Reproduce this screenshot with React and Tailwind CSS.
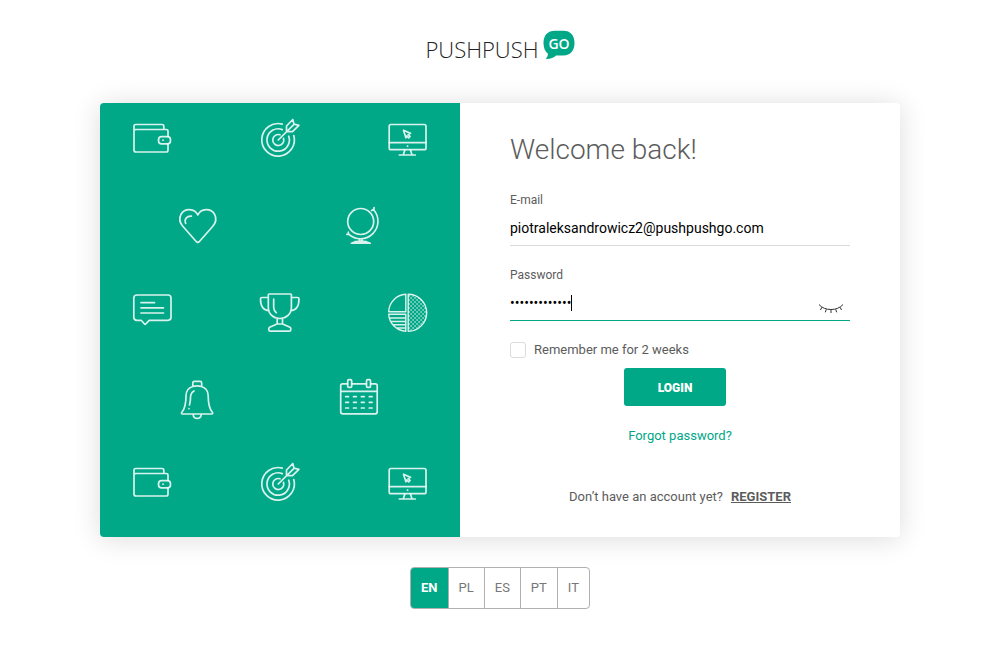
import React, { useState } from "react";

function Icon({ children }) {
  return (
    <svg
      viewBox="0 0 42 42"
      aria-hidden="true"
      className="size-[42px] shrink-0 overflow-visible fill-none stroke-white/85 stroke-[1.7]"
      strokeLinecap="round"
      strokeLinejoin="round"
    >
      {children}
    </svg>
  );
}

function Wallet() {
  return (
    <Icon>
      <path d="M37 19.5V14q0-1.5-1.5-1.5H5.2a1.5 1.5 0 0 1-2.2-1.7V9q0-1.5 1.7-1.5H31q1.8 0 1.8 1.6v3.2M3 10v23q0 2 2 2h30.3q1.7 0 1.7-1.7V27" />
      <rect x="27.5" y="19.7" width="12" height="7.2" rx="3.2" />
      <path d="M32 23.200h.1" />
    </Icon>
  );
}

function Target() {
  return (
    <Icon>
      <path d="M23.300 7.100A16.300 16.300 0 1 0 34.800 18.500M23.300 12.600A11.200 11.200 0 1 0 29.700 19.200M21 17.800A5.500 5.500 0 1 0 24.500 21.300" />
      <path d="M19.200 23 34.500 7.900M27.500 14.300V9l6.300-6.500 1.200 4.700 4.900 1.100-6.400 6.400h-5.500" />
    </Icon>
  );
}

function Monitor() {
  return (
    <Icon>
      <rect x="3.200" y="7.500" width="36.800" height="25.200" rx="1.800" />
      <path d="M3.200 25.600h36.800M21.500 29.200h.1M18.800 33l-1.300 4.300M24.500 33l1.300 4.300M13.300 38h16" />
      <path d="m17.500 13.200 7 3.100-2.300 1.200 1.900 2-1.400 1.300-1.800-1.900-1 1.900z" />
    </Icon>
  );
}

function Heart() {
  return (
    <Icon>
      <path d="M20.800 12C17.500 5 7.800 4.800 4.100 11.200 1.900 15.300 3 20.200 6 23.500l13.400 15.200q1.400 1.400 2.800 0l13.400-15.200c3-3.300 4.100-8.200 1.900-12.300C33.800 4.800 24.100 5 20.800 12Z" />
      <path d="M8.700 20.300c-1.800-4 1.200-7.600 5.700-7.200" />
    </Icon>
  );
}

function Globe() {
  return (
    <Icon>
      <circle cx="18.700" cy="18.500" r="13" />
      <path d="M31.600 6.700A17.500 17.500 0 0 1 6.900 31.400M29.600 7.500l2.300-1.200.2-1.800M6.200 29.200l.7 2.300-2-.1M17.500 36v2M20 36v2M9.400 40.200q9.300-4.300 18.800 0zM13 38.600h11.500" />
    </Icon>
  );
}

function Chat() {
  return (
    <Icon>
      <path d="M6 6h31q3 0 3 3v19.300q0 3-3 3H18.200L14.700 35q-.6.500-1.200 0L10.200 31.300H6q-3.200 0-3.200-3V9Q2.800 6 6 6ZM10 13.700h13.500M10 18.800h22.500M10 24h22.500" />
    </Icon>
  );
}

function Trophy() {
  return (
    <Icon>
      <path d="M9.300 7V5.700q0-.7.800-.7h21.500q.8 0 .8.700v12.500c0 7-5.200 11.300-11.600 11.300S9.300 25.200 9.300 18.200zM9 8.500H3q-1.500 0-1.500 1.500c0 7 2.800 11.300 8.500 11.700M32.700 8.500H38.500q1.500 0 1.500 1.500c0 7-2.800 11.300-8.300 11.700M18.200 29.500V35M23.500 29.500V35M18 35h5.600l7.400 3.300q.8.500.8 1.500v1q0 1.400-1.500 1.400h-19q-1.500 0-1.500-1.400v-1q0-1 .8-1.500zM14.700 10v8.500q.2 3.500 2.600 5.200" />
    </Icon>
  );
}

function PieChart() {
  return (
    <Icon>
      <defs>
        <pattern id="pie-dots" width="4" height="4" patternUnits="userSpaceOnUse">
          <path d="M1 1h.1M3 3h.1" className="stroke-white stroke-[1.300]" />
        </pattern>
      </defs>
      <path d="M22.200 5.300a18.500 18.500 0 0 1 0 37z" fill="url(#pie-dots)" className="stroke-[1.400]" />
      <path d="M19.800 5.300v17.400H2.700A18 18 0 0 1 19.800 5.300ZM2.700 25.200h17.100v17A18 18 0 0 1 2.700 25.200ZM3.700 29h16M5.200 32.500h14.500M7.500 35.800h12.200M11.200 39h8.500" className="stroke-[1.400]" />
    </Icon>
  );
}

function Bell() {
  return (
    <Icon>
      <path d="M14.800 11V8q0-1.600 1.600-1.600h5.700q1.600 0 1.600 1.600v3M14.800 11.500C9.500 13 8 16.500 8 21c0 7-1 12.500-4 16-.9 1.200-.6 2 .7 2h28.800c1.300 0 1.600-.8.700-2-3-3.500-4-9-4-16 0-4.500-1.500-8-6.800-9.500q-4.300-1.200-8.600 0ZM15.200 39.500c.3 5.200 7.700 5.200 8 0M16 16q-3.500 2-3.500 6.500 0 4-1 7.500M11 33.500v.1" />
    </Icon>
  );
}

function Calendar() {
  return (
    <Icon>
      <path d="M7.500 8.800H2.500q-1.800 0-1.800 1.800v26.200q0 2 2 2h32.500q2 0 2-2V10.600q0-1.800-1.800-1.800H31M12 8.800h14M.8 16.400h36.300" />
      <rect x="7.700" y="4.700" width="4" height="7.700" rx="1.200" />
      <rect x="26.500" y="4.700" width="4" height="7.700" rx="1.200" />
      <path d="M5.700 21.700h2.800M13.500 21.700h2.800M21.400 21.700h2.800M29.300 21.700h2.800M5.700 27.300h2.800M13.500 27.300h2.800M21.400 27.300h2.800M29.300 27.300h2.800M5.700 33h2.800M13.500 33h2.800M21.400 33h2.800M29.300 33h2.800" />
    </Icon>
  );
}

function IconPanel() {
  return (
    <div className="hidden w-[45%] flex-col gap-11 bg-[#00a887] pt-[14px] pb-[34px] md:flex">
      <div className="flex justify-between pr-8 pl-[31px]">
        <Wallet /><Target /><Monitor />
      </div>
      <div className="flex justify-between pr-[76px] pl-[77px]">
        <Heart /><Globe />
      </div>
      <div className="flex justify-between pr-8 pl-[31px]">
        <Chat /><Trophy /><PieChart />
      </div>
      <div className="flex justify-between px-[78px]">
        <Bell /><Calendar />
      </div>
      <div className="flex justify-between pr-8 pl-[31px]">
        <Wallet /><Target /><Monitor />
      </div>
    </div>
  );
}

function Logo() {
  return (
    <a href="#" className="flex h-[30px] items-start gap-1" aria-label="PushPushGo">
      <span className="pt-[7px] font-['Open_Sans',sans-serif] text-[22px] leading-6 font-light text-[#222]">
        PUSHPUSH
      </span>
      <svg viewBox="0 0 32 30" className="h-[30px] w-8" aria-hidden="true">
        <path
          d="M12 .8h8.500c7 0 11 4.700 11 12.200s-4 12.500-11 12.500H13C10.500 28 6.500 29.200 2.500 28.800 4.300 27.500 5 26 4.800 23.500 2 21.500.5 17.500.5 13 .5 5.500 4.500.8 12 .8Z"
          fill="#00a887"
        />
        <text x="16" y="18.500" textAnchor="middle" fill="#fff" className="font-['Open_Sans',sans-serif] text-[14px] font-semibold">
          GO
        </text>
      </svg>
    </a>
  );
}

function LoginForm() {
  const [email, setEmail] = useState("piotraleksandrowicz2@pushpushgo.com");
  const [password, setPassword] = useState("pushpushgo123");
  const [visible, setVisible] = useState(false);
  return (
    <form
      onSubmit={(e) => e.preventDefault()}
      className="flex min-w-0 flex-1 flex-col px-[50px] pt-[31px] pb-[27px]"
    >
      <h1 className="text-[28px] leading-8 font-light">Welcome back!</h1>

      <label htmlFor="email" className="mt-[26px] text-xs leading-4">E-mail</label>
      <input
        id="email"
        type="email"
        value={email}
        onChange={(e) => setEmail(e.target.value)}
        className="h-[38px] w-full border-b border-b-[#d9d9d9] pt-0.5 text-sm text-black outline-none"
      />

      <label htmlFor="password" className="mt-[21px] text-xs leading-4">Password</label>
      <div className="flex h-[38px] items-center border-b border-b-[#00a887] pt-0.5">
        <input
          id="password"
          type={visible ? "text" : "password"}
          value={password}
          onChange={(e) => setPassword(e.target.value)}
          className="field-sizing-content text-sm text-black caret-transparent outline-none"
        />
        <span className="h-4 w-px bg-black" />
        <button
          type="button"
          aria-label="Show password"
          onClick={() => setVisible(!visible)}
          className="mt-3 mr-1.5 ml-auto"
        >
          <svg viewBox="0 0 26 12" className="h-3 w-[26px] fill-none stroke-[#333]" aria-hidden="true">
            <path d="M1 1.500c5.500 6.700 18.500 6.700 24 0M3.800 4.300 2.500 7M8.300 6.300 7.300 9.300M13 6.800V10M17.700 6.300l1 3M22.200 4.300 23.500 7" />
          </svg>
        </button>
      </div>

      <label className="mt-5 flex items-center gap-2 text-[13px] leading-[18px]">
        <input
          type="checkbox"
          className="size-4 appearance-none rounded-[3px] border border-[#dcdcdc] bg-white checked:bg-[#00a887]"
        />
        Remember me for 2 weeks
      </label>

      <button
        type="submit"
        className="mt-[9px] mr-[10px] h-[38px] w-[102px] self-center rounded-[3px] bg-[#00a887] pt-0.5 text-xs font-black text-white"
      >
        LOGIN
      </button>
      <a href="#" className="mt-5 self-center text-[13px] leading-5 text-[#00a887]">Forgot password?</a>
      <p className="mt-[41px] flex justify-center gap-2 text-[13px] leading-5">
        Don’t have an account yet?
        <a href="#" className="font-bold underline">REGISTER</a>
      </p>
    </form>
  );
}

function Languages() {
  return (
    <nav
      aria-label="Language"
      className="flex h-[42px] divide-x divide-[#b0b0b0] overflow-hidden rounded border border-[#b0b0b0] text-[13px] text-[#777]"
    >
      <button type="button" className="bg-[#00a887] px-[10px] font-bold text-white">EN</button>
      <button type="button" className="px-[10px]">PL</button>
      <button type="button" className="px-[10px]">ES</button>
      <button type="button" className="px-[10px]">PT</button>
      <button type="button" className="px-[10px]">IT</button>
    </nav>
  );
}

export default function App() {
  return (
    <main className="flex min-h-screen flex-col items-center bg-white px-4 pt-[30px] pb-8 font-[Roboto,sans-serif] text-[#5c5c5c]">
      <Logo />
      <div className="mt-[43px] flex w-full max-w-[800px] overflow-hidden rounded bg-white shadow-[0_2px_28px_rgba(0,0,0,0.14)]">
        <IconPanel />
        <LoginForm />
      </div>
      <div className="mt-[30px]">
        <Languages />
      </div>
    </main>
  );
}
